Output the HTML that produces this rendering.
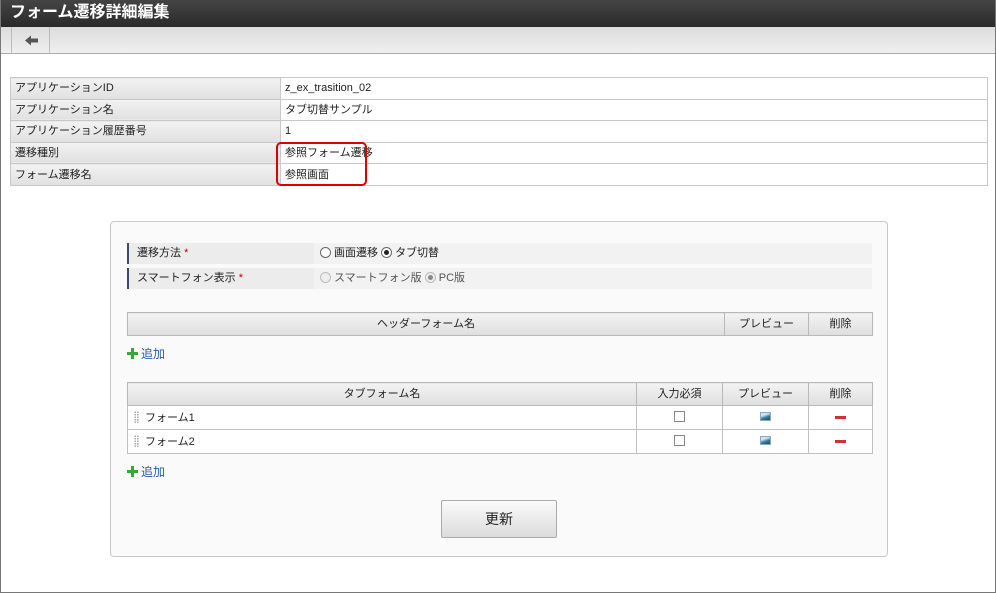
<!DOCTYPE html>
<html><head><meta charset="utf-8"><style>
*{margin:0;padding:0;box-sizing:border-box}
body{width:996px;height:593px;overflow:hidden;background:#fff;font-family:"Liberation Sans","Noto Sans CJK JP",sans-serif;font-size:11px;color:#222;position:relative}
.frame{position:absolute;left:0;top:0;width:996px;height:593px;border:1px solid #777;border-top:none}
.title{position:absolute;left:0;top:0;width:996px;height:27px;background:linear-gradient(#444,#2a2a2a);color:#fff;font-size:16px;font-weight:bold;padding:2px 0 0 10px;line-height:22px}
.tool{position:absolute;left:0;top:27px;width:995px;height:27px;background:linear-gradient(#dcdcdc,#efefef);border-bottom:1px solid #aaa}
.back{position:absolute;left:11px;top:0;width:39px;height:27px;border-left:1px solid #bbb;border-right:1px solid #bbb}
.info{position:absolute;left:10px;top:77px;width:978px;border-collapse:collapse}
.info td{border:1px solid #c8c8c8;height:21.6px;padding:0 4px;font-size:11px;line-height:12px;vertical-align:middle}
.info td.l{width:270px;background:linear-gradient(#f2f2f2,#e0e0e0);}
.red{position:absolute;left:276px;top:142px;width:91px;height:44px;border:2.5px solid #d00;border-radius:5px}
.panel{position:absolute;left:110px;top:221px;width:778px;height:336px;border:1px solid #c8c8c8;border-radius:4px;background:#fafafa}
.row{position:absolute;left:16px;width:745px;height:21px;background:#ececec}
.row .k{position:absolute;left:0;top:0;width:185px;height:21px;border-left:2px solid #3a4a6a;padding:0 8px;font-size:11px;line-height:21px}
.row .v{position:absolute;left:187px;top:0;right:0;height:21px;background:#f2f2f2;padding:0 6px;line-height:21px}
.st{color:#c00}
.rad{display:inline-block;width:11px;height:11px;border:1px solid #666;border-radius:50%;vertical-align:-2px;background:#fff;position:relative;margin-right:3px}
.rad.on::after{content:"";position:absolute;left:2px;top:2px;width:5px;height:5px;border-radius:50%;background:#222}
.dis{border-color:#bbb;background:#eee}.dis.on::after{background:#888}
table.g{position:absolute;left:16px;width:746px;border-collapse:collapse;background:#fff}
table.g th{height:23px;background:linear-gradient(#f3f3f3,#dedede);border:1px solid #b8b8b8;font-weight:normal;font-size:11px;line-height:12px}
table.g td{height:24px;border:1px solid #c0c0c0;font-size:11px;line-height:12px}
.add{position:absolute;left:16px;color:#2a5caa;font-size:12px}
.plus{display:inline-block;width:11px;height:11px;position:relative;vertical-align:-1px;margin-right:3px}
.plus::before{content:"";position:absolute;left:4px;top:0;width:3px;height:11px;background:#3a3}
.plus::after{content:"";position:absolute;left:0;top:4px;width:11px;height:3px;background:#3a3}
.grip{display:inline-block;width:5px;height:12px;margin:0 6px 0 6px;vertical-align:-2px;background:radial-gradient(circle,#aaa 0.8px,transparent 1px) 0 0/2.5px 2.5px}
.cb{display:inline-block;width:11px;height:11px;border:1px solid #888;background:#fff}
.pv{display:inline-block;width:11px;height:9px;background:linear-gradient(160deg,#cfe3f3 30%,#3a7a9a 60%,#1d4a5a);border:1px solid #8ab}
.del{display:inline-block;width:11px;height:3px;background:#c33;vertical-align:middle}
.btn{position:absolute;left:330px;top:278px;width:116px;height:38px;border:1px solid #aaa;border-radius:2px;background:linear-gradient(#fafafa,#dcdcdc);text-align:center;line-height:36px;font-size:14px}
</style></head><body>
<div class="title">フォーム遷移詳細編集</div>
<div class="tool"><div class="back"><svg width="39" height="27"><path d="M13 13.5 L19 8.5 V11.5 H26 V15.5 H19 V18.5 Z" fill="#555"/></svg></div></div>
<table class="info">
<tr><td class="l">アプリケーションID</td><td>z_ex_trasition_02</td></tr>
<tr><td class="l">アプリケーション名</td><td>タブ切替サンプル</td></tr>
<tr><td class="l">アプリケーション履歴番号</td><td>1</td></tr>
<tr><td class="l">遷移種別</td><td>参照フォーム遷移</td></tr>
<tr><td class="l">フォーム遷移名</td><td>参照画面</td></tr>
</table>
<div class="red"></div>
<div class="panel">
<div class="row" style="top:21px"><div class="k">遷移方法 <span class="st">*</span></div><div class="v"><span class="rad"></span>画面遷移 <span class="rad on"></span>タブ切替</div></div>
<div class="row" style="top:46px"><div class="k">スマートフォン表示 <span class="st">*</span></div><div class="v" style="color:#555"><span class="rad dis"></span>スマートフォン版 <span class="rad dis on"></span>PC版</div></div>
<table class="g" style="top:90px"><tr><th>ヘッダーフォーム名</th><th style="width:84px">プレビュー</th><th style="width:64px">削除</th></tr></table>
<div class="add" style="top:123px"><span class="plus"></span>追加</div>
<table class="g" style="top:160px"><tr><th>タブフォーム名</th><th style="width:86px">入力必須</th><th style="width:86px">プレビュー</th><th style="width:64px">削除</th></tr>
<tr><td><span class="grip"></span>フォーム1</td><td align="center"><span class="cb"></span></td><td align="center"><span class="pv"></span></td><td align="center"><span class="del"></span></td></tr>
<tr><td><span class="grip"></span>フォーム2</td><td align="center"><span class="cb"></span></td><td align="center"><span class="pv"></span></td><td align="center"><span class="del"></span></td></tr>
</table>
<div class="add" style="top:241px"><span class="plus"></span>追加</div>
<div class="btn">更新</div>
</div>
<div class="frame"></div>
</body></html>
